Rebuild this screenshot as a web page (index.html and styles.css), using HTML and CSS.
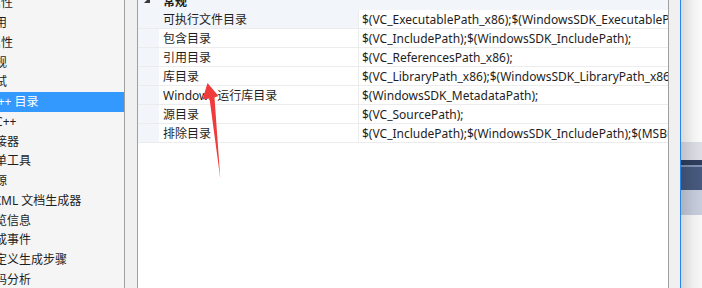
FILE: index.html
```html
<!DOCTYPE html>
<html lang="zh-CN">
<head>
    <meta charset="UTF-8">
    <title>VC++ 目录</title>
    <link rel="stylesheet" href="styles.css">
</head>
<body>
    <div class="window">
        <ul class="tree">
            <li class="node parent"><span>通用属性</span></li>
            <li class="node"><span>引用</span></li>
            <li class="node parent"><span>配置属性</span></li>
            <li class="node"><span>常规</span></li>
            <li class="node"><span>调试</span></li>
            <li class="node selected"><span>VC++ 目录</span></li>
            <li class="node"><span>C/C++</span></li>
            <li class="node"><span>链接器</span></li>
            <li class="node"><span>清单工具</span></li>
            <li class="node"><span>资源</span></li>
            <li class="node latin"><span>XML 文档生成器</span></li>
            <li class="node"><span>浏览信息</span></li>
            <li class="node"><span>生成事件</span></li>
            <li class="node"><span>自定义生成步骤</span></li>
            <li class="node"><span>代码分析</span></li>
        </ul>

        <div class="splitter"></div>

        <div class="grid">
            <div class="row category">
                <div class="indent">
                    <svg width="20" height="19" viewBox="0 0 20 19"><polygon points="12,6 12,12 6,12" fill="#3a3a3a"/></svg>
                </div>
                <div class="name">常规</div>
            </div>
            <div class="row hover">
                <div class="indent"></div>
                <div class="name">可执行文件目录</div>
                <div class="value">$(VC_ExecutablePath_x86);$(WindowsSDK_ExecutablePath);$(VS_ExecutablePath);$(MSBuild_ExecutablePath);</div>
            </div>
            <div class="row">
                <div class="indent"></div>
                <div class="name">包含目录</div>
                <div class="value">$(VC_IncludePath);$(WindowsSDK_IncludePath);</div>
            </div>
            <div class="row">
                <div class="indent"></div>
                <div class="name">引用目录</div>
                <div class="value">$(VC_ReferencesPath_x86);</div>
            </div>
            <div class="row">
                <div class="indent"></div>
                <div class="name">库目录</div>
                <div class="value">$(VC_LibraryPath_x86);$(WindowsSDK_LibraryPath_x86);$(NETFXKitsDir)Lib\um\x86</div>
            </div>
            <div class="row">
                <div class="indent"></div>
                <div class="name">Windows 运行库目录</div>
                <div class="value">$(WindowsSDK_MetadataPath);</div>
            </div>
            <div class="row">
                <div class="indent"></div>
                <div class="name">源目录</div>
                <div class="value">$(VC_SourcePath);</div>
            </div>
            <div class="row">
                <div class="indent"></div>
                <div class="name">排除目录</div>
                <div class="value">$(VC_IncludePath);$(WindowsSDK_IncludePath);$(MSBuild_ExecutablePath);$(VC_LibraryPath_x86);</div>
            </div>
        </div>

        <div class="scrollbar"></div>
        <div class="backdrop"></div>
    </div>

    <!-- red annotation arrow drawn over the grid -->
    <svg class="arrow" width="702" height="288" viewBox="0 0 702 288">
        <polygon points="207.5,83 218.5,96 214.5,97.5 220.3,178.5 209.5,98.5 202.5,99.5" fill="#ef3b3b"/>
    </svg>
</body>
</html>
```

FILE: styles.css
```css
body {
    margin: 0;
    width: 702px;
    height: 288px;
    overflow: hidden;
    font-family: 'Noto Sans', 'Noto Sans CJK SC', sans-serif;
    font-size: 12px;
    color: #1e1e1e;
    background: #ffffff;
}

.window {
    display: flex;
    height: 288px;
}

/* left navigation tree, scrolled sideways */
.tree {
    list-style: none;
    margin: 0;
    padding: 0;
    width: 124px;
    flex: none;
    background: #f5f5f5;
    overflow: hidden;
}
.node {
    height: 19.75px;
    line-height: 19.75px;
    white-space: nowrap;
}
.node:first-child {
    margin-top: -6.75px;
}
.node span {
    display: inline-block;
    margin-left: -17px;
}
.node.parent span {
    margin-left: -35px;
}
.node.latin span {
    margin-left: -6px;
}
.node.selected {
    background: #3399ff;
    color: #ffffff;
}

.splitter {
    width: 12px;
    flex: none;
    background: #f0f0f0;
    border-left: 1px solid #a0a0a0;
    border-right: 1px solid #a0a0a0;
}

/* property grid */
.grid {
    width: 530px;
    flex: none;
    background: #ffffff;
    overflow: hidden;
}
.row {
    display: grid;
    grid-template-columns: 21px 200px 309px;
    height: 19px;
    white-space: nowrap;
}
.row > div {
    box-sizing: border-box;
    height: 19px;
    padding-top: 2px;
    line-height: 16px;
    border-bottom: 1px solid #ececec;
}
.row.category {
    margin-top: -9px;
    background: #f2f5fa;
}
.row.category > div {
    border-bottom-color: #f2f5fa;
}
.row.category .name {
    background: #f2f5fa;
    font-weight: bold;
    border-right: none;
    grid-column: 2 / 4;
    padding-top: 3px;
}
.row > .indent {
    padding-top: 0;
    background: #f2f5fa;
}
.indent svg {
    display: block;
}
.name {
    padding-left: 4px;
    border-right: 1px solid #ececec;
    background: #ffffff;
    overflow: hidden;
}
.row.hover .name {
    background: #f2f5fa;
}
.value {
    padding-left: 3px;
}

.scrollbar {
    width: 11px;
    flex: none;
    background: #f0f0f0;
    border-left: 1px solid #a0a0a0;
}

/* window behind the dialog */
.backdrop {
    flex: 1;
    border-left: 1px solid #2a85e8;
    background:
        linear-gradient(90deg, rgba(0,0,0,0.13) 0%, rgba(0,0,0,0.03) 60%, rgba(0,0,0,0) 100%),
        linear-gradient(180deg,
            #fafafa 0px, #fafafa 142px,
            #dcdee5 142px, #dcdee5 160px,
            #2f3e5e 160px, #2f3e5e 165px,
            #8393b3 165px, #8393b3 167px,
            #47597f 167px, #47597f 190px,
            #c7cddd 190px, #c7cddd 215px,
            #f7f7f7 215px, #f7f7f7 288px);
}

.arrow {
    position: absolute;
    left: 0;
    top: 0;
    pointer-events: none;
}
```
